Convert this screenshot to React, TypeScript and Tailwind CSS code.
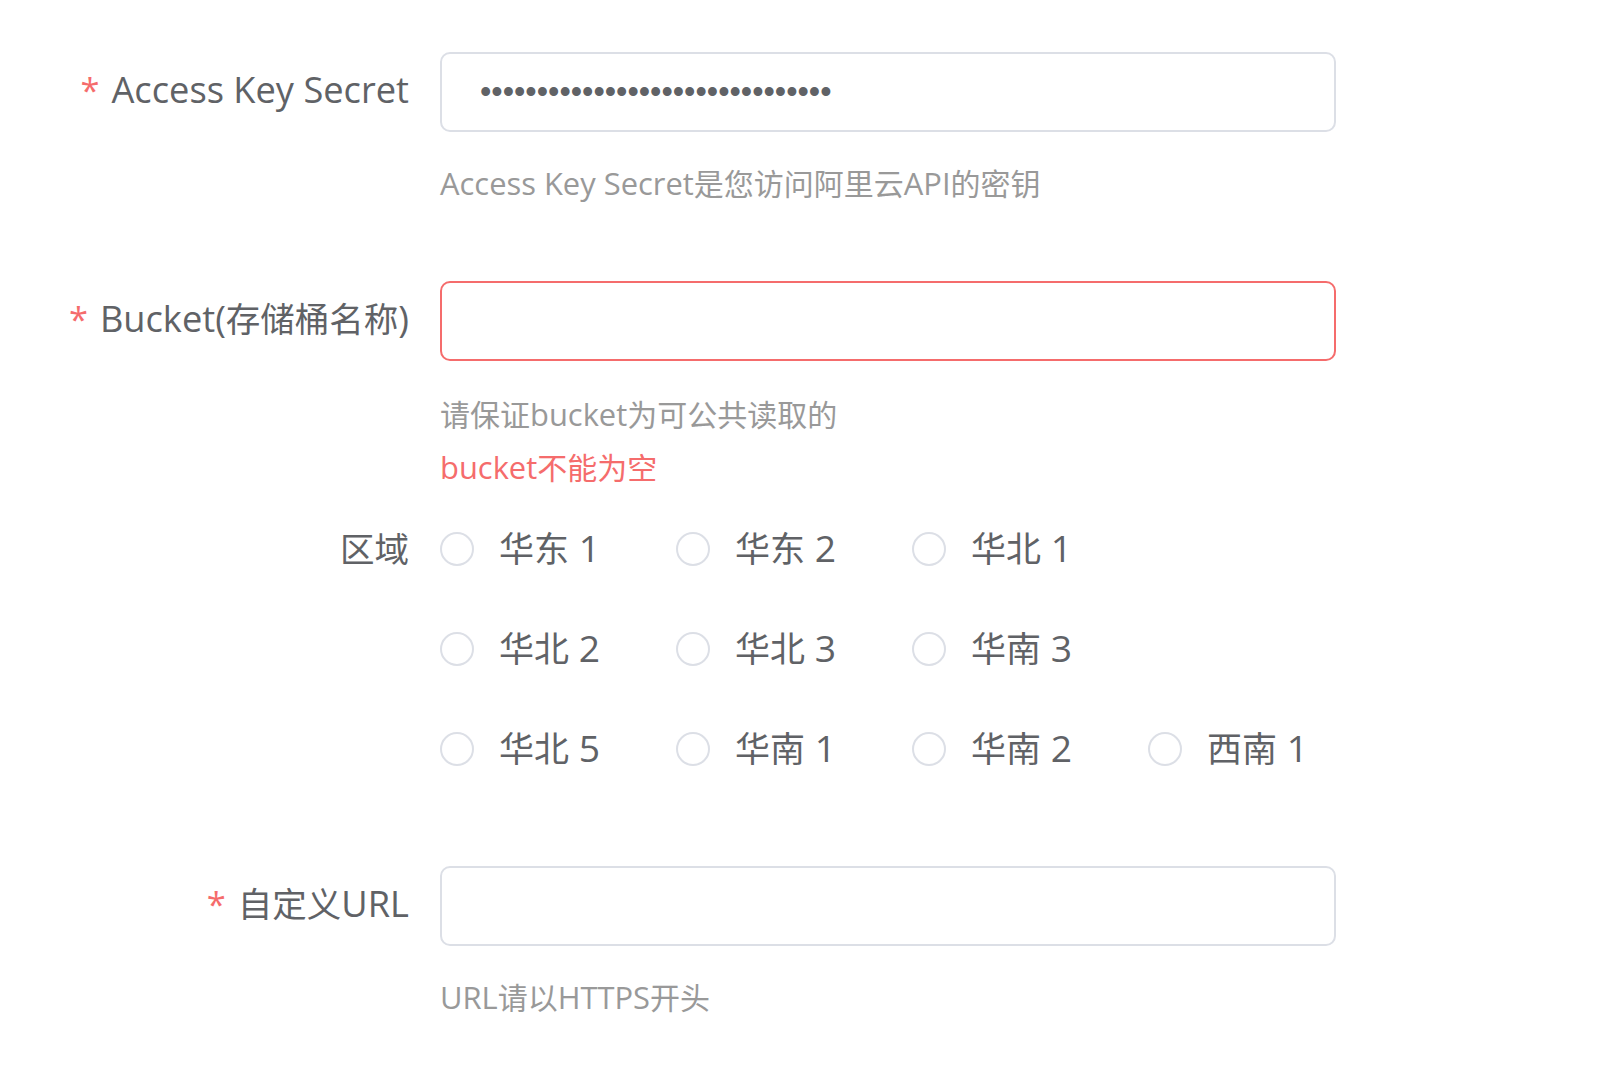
import React from "react";

const font = '"Open Sans", "Noto Sans CJK SC", sans-serif';

// Latin runs are drawn slightly larger to match the width of the original face
function T({ text, k = "text-[1.05em]" }: { text: string; k?: string }) {
  const parts = text.split(/([\x20-\x7E]+)/).filter(Boolean);
  return (
    <>
      {parts.map((p, i) =>
        /^[\x20-\x7E]+$/.test(p) ? (
          <span key={i} className={k + " leading-none"}>
            {p}
          </span>
        ) : (
          <span key={i}>{p}</span>
        )
      )}
    </>
  );
}

function Label({ text, required }: { text: string; required?: boolean }) {
  return (
    <div className="w-[409px] shrink-0 pb-[4px] text-right text-[34.5px] leading-[40px] text-[#606266] whitespace-nowrap">
      {required && <span className="text-[#F56C6C] mr-[12px]">*</span>}
      <T text={text} />
    </div>
  );
}

function Helper({ text, error }: { text: string; error?: boolean }) {
  return (
    <div
      className={
        "ml-[440px] leading-[40px] text-[30px] " +
        (error ? "text-[#F56C6C]" : "text-[#999999]")
      }
    >
      <T text={text} k="text-[1.03em]" />
    </div>
  );
}

function Radio({ text }: { text: string }) {
  return (
    <label className="flex items-center w-[236px] h-[40px] cursor-pointer">
      <span className="w-[34px] h-[34px] rounded-full border-2 border-[#DCDFE6] bg-white shrink-0" />
      <span className="ml-[25px] text-[35px] leading-[40px] text-[#606266] whitespace-nowrap">
        <T text={text} k="text-[1.065em]" />
      </span>
    </label>
  );
}

const regions = [
  ["华东 1", "华东 2", "华北 1"],
  ["华北 2", "华北 3", "华南 3"],
  ["华北 5", "华南 1", "华南 2", "西南 1"],
];

export default function App() {
  return (
    <div className="w-[1605px] h-[1073px] bg-white overflow-hidden" style={{ fontFamily: font }}>
      {/* Access Key Secret */}
      <div className="flex items-center mt-[52px]">
        <Label text="Access Key Secret" required />
        <div className="ml-[31px] w-[896px] h-[80px] border-2 border-[#DCDFE6] rounded-[10px] flex items-center pl-[38px]">
          <span
            className="text-[32.4px] text-[#606266]"
            style={{ fontFamily: '"Liberation Sans", sans-serif' }}
          >
            {"•".repeat(31)}
          </span>
        </div>
      </div>
      <div className="mt-[32px]">
        <Helper text="Access Key Secret是您访问阿里云API的密钥" />
      </div>

      {/* Bucket */}
      <div className="flex items-center mt-[77px]">
        <Label text="Bucket(存储桶名称)" required />
        <div className="ml-[31px] w-[896px] h-[80px] border-2 border-[#F56C6C] rounded-[10px]" />
      </div>
      <div className="mt-[34px]">
        <Helper text="请保证bucket为可公共读取的" />
      </div>
      <div className="mt-[13px]">
        <Helper text="bucket不能为空" error />
      </div>

      {/* Region */}
      <div className="flex items-start mt-[41px]">
        <div className="w-[409px] shrink-0 h-[40px] flex items-center justify-end text-[34.5px] text-[#606266]">
          区域
        </div>
        <div className="ml-[31px] flex flex-col gap-[60px]">
          {regions.map((row, i) => (
            <div key={i} className="flex">
              {row.map((r) => (
                <Radio key={r} text={r} />
              ))}
            </div>
          ))}
        </div>
      </div>

      {/* Custom URL */}
      <div className="flex items-center mt-[97px]">
        <Label text="自定义URL" required />
        <div className="ml-[31px] w-[896px] h-[80px] border-2 border-[#DCDFE6] rounded-[10px]" />
      </div>
      <div className="mt-[32px]">
        <Helper text="URL请以HTTPS开头" />
      </div>
    </div>
  );
}
